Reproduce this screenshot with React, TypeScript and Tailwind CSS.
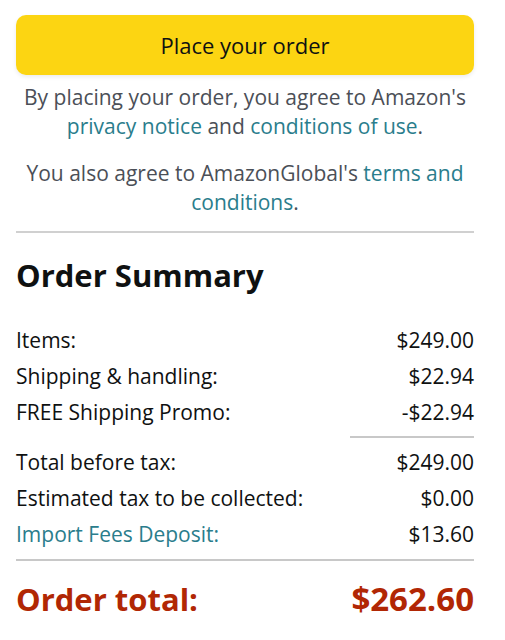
import React from "react";

const rows1 = [
  { label: "Items:", value: "$249.00" },
  { label: "Shipping & handling:", value: "$22.94" },
  { label: "FREE Shipping Promo:", value: "-$22.94" },
];

const rows2 = [
  { label: "Total before tax:", value: "$249.00" },
  { label: "Estimated tax to be collected:", value: "$0.00" },
  { label: "Import Fees Deposit:", value: "$13.60", link: true },
];

function Row({ label, value, link }: { label: string; value: string; link?: boolean }) {
  return (
    <div className="flex justify-between h-9 items-center">
      <span className={link ? "text-[#2a7d8c]" : "text-[#0f1111]"}>{label}</span>
      <span className="text-[#0f1111]">{value}</span>
    </div>
  );
}

export default function App() {
  return (
    <div
      className="w-[505px] h-[640px] bg-white pl-4 pr-[31px] pt-[15px] text-[21px]"
      style={{ fontFamily: '"Open Sans", "Noto Sans", sans-serif' }}
    >
      <button className="w-full h-[60px] rounded-[10px] bg-[#fcd512] text-[#0f1111] text-[22px] shadow-[0_2px_4px_rgba(0,0,0,0.08)]">
        Place your order
      </button>
      <p className="text-center text-[#4b4f57] leading-[29px] mt-[8px] -mx-2">
        By placing your order, you agree to Amazon's{" "}
        <span className="text-[#2a7d8c]">privacy notice</span> and{" "}
        <span className="text-[#2a7d8c]">conditions of use</span>.
      </p>
      <p className="text-center text-[#4b4f57] leading-[29px] mt-[18px] -mx-2">
        You also agree to AmazonGlobal's{" "}
        <span className="text-[#2a7d8c]">terms and conditions</span>.
      </p>
      <div className="h-[2px] bg-[#d0d0d0] mt-[14px]" />
      <h2 className="text-[31px] font-bold text-[#0f1111] mt-[27px] leading-none">Order Summary</h2>
      <div className="mt-[32px]">
        {rows1.map((r) => (
          <Row key={r.label} {...r} />
        ))}
      </div>
      <div className="flex justify-end mt-[5px]">
        <div className="w-[124px] h-[2px] bg-[#c8c8c8]" />
      </div>
      <div className="mt-[7px]">
        {rows2.map((r) => (
          <Row key={r.label} {...r} />
        ))}
      </div>
      <div className="h-[2px] bg-[#c8c8c8] mt-[6px]" />
      <div className="flex justify-between items-center mt-[13px] text-[31px] font-bold text-[#b12704]">
        <span>Order total:</span>
        <span className="text-[33px]">$262.60</span>
      </div>
    </div>
  );
}
